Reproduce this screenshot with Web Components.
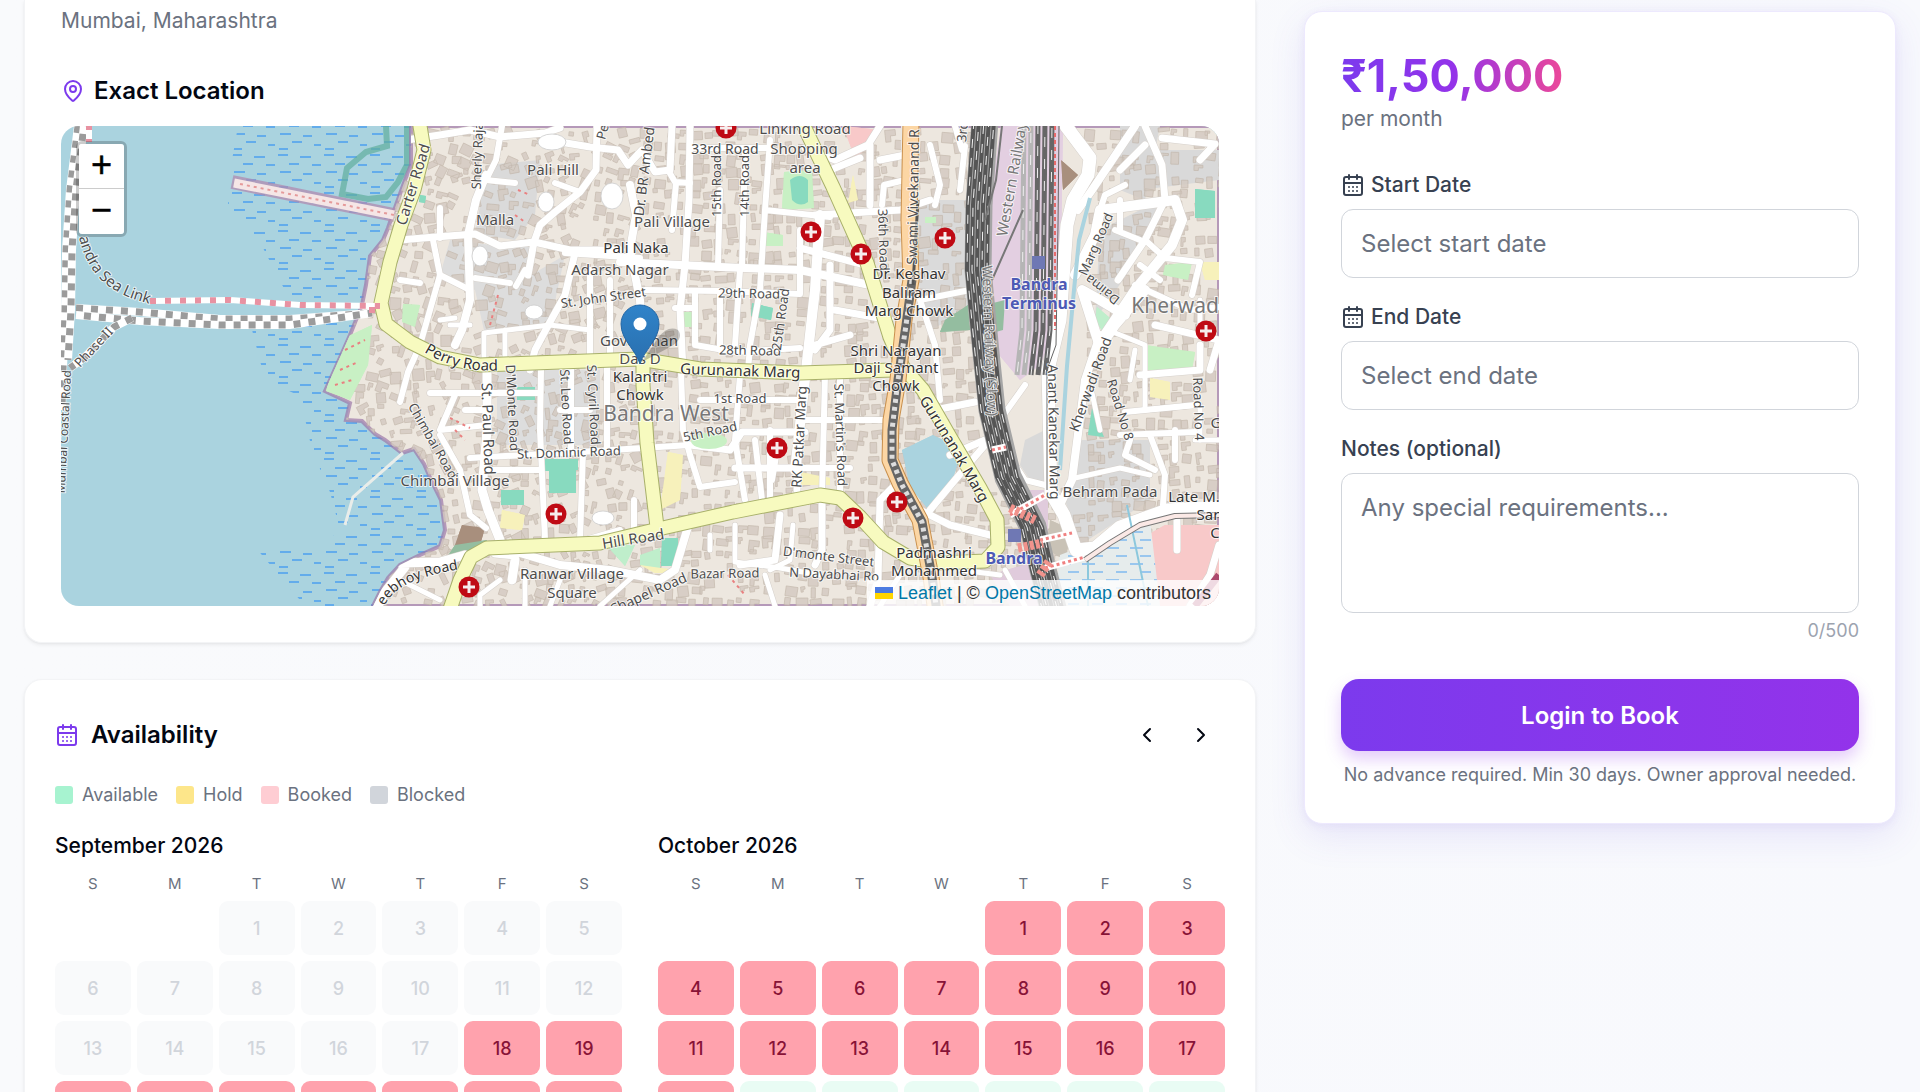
<!DOCTYPE html>
<html lang="en">
<head>
<meta charset="utf-8">
<meta name="viewport" content="width=device-width, initial-scale=1">
<title>Property details</title>
<style>
  body { margin: 0; background: linear-gradient(90deg, #f9fafc, #f8f9fd); font-family: Inter, "Liberation Sans", sans-serif; color: #030712; height: 100vh; overflow: hidden; }
</style>
</head>
<body>
<listing-page></listing-page>

<script>
const ICONS = {
  pin: '<path d="M20 10c0 5-5.500 10.200-7.400 11.800a1 1 0 0 1-1.200 0C9.500 20.200 4 15 4 10a8 8 0 0 1 16 0"/><circle cx="12" cy="10" r="3"/>',
  calendar: '<path d="M8 2v4M16 2v4M3 10h18"/><rect x="3" y="4" width="18" height="18" rx="2"/><path d="M8 14h.01M12 14h.01M16 14h.01M8 18h.01M12 18h.01M16 18h.01"/>',
  left: '<path d="m15 18-6-6 6-6"/>',
  right: '<path d="m9 18 6-6-6-6"/>'
};

class UiIcon extends HTMLElement {
  constructor() { super(); this.attachShadow({ mode: 'open' }); }
  connectedCallback() {
    this.shadowRoot.innerHTML = `<style>:host{display:inline-flex;width:24px;height:24px;flex:none}svg{width:100%;height:100%}</style>
    <svg viewBox="0 0 24 24" fill="none" stroke="currentColor" stroke-width="2" stroke-linecap="round" stroke-linejoin="round" aria-hidden="true">${ICONS[this.getAttribute('name')]}</svg>`;
  }
}
customElements.define('ui-icon', UiIcon);

class SurfaceCard extends HTMLElement {
  constructor() {
    super();
    this.attachShadow({ mode: 'open' }).innerHTML = `<style>
      :host{display:block;background:#fff;border:1px solid #f3f4f6;border-radius:18px;padding:var(--pad,36px);box-shadow:0 2px 4px rgba(0,0,0,.06),0 1px 2px rgba(0,0,0,.03)}
      :host([continued]){border-top:0;border-top-left-radius:0;border-top-right-radius:0;padding-top:6px}
      :host([raised]){border-color:#ede9fe;box-shadow:0 12px 36px rgba(109,80,220,.12),0 2px 8px rgba(109,80,220,.08)}
    </style><slot></slot>`;
  }
}
customElements.define('surface-card', SurfaceCard);

/* ---------- street map ---------- */
const LAND = 'M411 126L411 165L405 180L396 205L388 228L383 240L370 256L366 285L362 305L350 335L338 362L325 391L350 403L346 420L362 421L375 434L385 440L402 453L414 449L424 464L432 482L441 500L445 530L440 546L420 555L400 565L388 578L380 592L373 606H1219V126Z';
const WAVES = 'M238 126H411V165L396 205L366 256V300H290L262 246L228 205L232 160ZM250 322H356L325 391L350 403V420H362L402 453L424 464L445 530L440 546L400 565L373 606H305L256 548L316 552L340 530L330 492L312 450L300 396L265 380Z';

const YELLOW = [
  'M419 120L424 150L414 190L401 225L390 262L381 303L386 324L410 342L440 357L480 365L560 362L640 359L700 369L800 373L893 370',
  'M801 120L833 187L867 263L890 337L903 367L923 390L950 437L980 488L997 520L998 547L985 561L940 563L910 558L883 542L860 517L840 498L820 495L733 512L667 527L600 543L487 548L471 557L460 580L449 612',
  'M643 365L643 385L647 443L657 527'
];
const WHITE = [
  [7,'M400 141L440 135L470 130L500 137L545 133L560 128'],[6,'M502 126L496 160L486 180L515 183'],[8,'M486 175L476 200L468 235L470 300L462 330L455 345'],
  [7,'M400 240L435 237L475 234L500 246L534 242L570 250L620 250'],[7,'M597 126L596 170L580 192L555 212L540 225L534 242L528 275'],[6,'M555 183L580 192M525 270L516 286M475 278L510 283'],
  [6,'M433 240L440 275L430 310L420 345L408 372L400 402'],[6,'M440 275L470 290M440 208V238M400 280L420 283'],[7,'M575 253L565 295L550 322L535 350L530 370'],
  [5,'M484 362V333L550 325L590 330M505 330V360M450 325H470M440 320L455 318'],[7,'M560 142L590 147L618 150L628 165L642 150L655 172L670 170L672 126'],
  [8,'M630 185L636 215L630 250L640 300L643 365'],[6,'M668 170L675 182L690 183M676 183L672 230'],[7,'M690 126L689 200L685 265L680 310L683 370'],[8,'M620 262L720 267L800 270L865 284'],
  [6,'M720 190L718 265M745 150L742 265M740 270L735 345'],[6,'M765 210L760 290L750 345L748 372M770 140L765 210L830 217'],[6,'M645 290L720 291L800 294L800 230'],
  [6,'M720 292V350M695 292V345L735 352L800 348M675 308H695V345'],[10,'M820 215L815 290L806 370L795 470'],[6,'M690 148H770'],[6,'M590 270L590 330V358M565 253L640 258M610 280V358'],
  [9,'M487 370V430L482 490L488 510L500 540'],[6,'M430 393H540M465 410H482M440 430L487 425M455 395L440 430M440 435L460 470L470 515L486 528'],[6,'M541 370L540 430L545 540'],[6,'M470 458L580 452L690 445M490 470H540'],
  [6,'M571 370V450M607 365V448M583 452L580 540M560 410H590'],[6,'M681 370L683 430L690 455L700 487L735 482'],[6,'M700 400H800M740 375L735 440L745 500'],[7,'M690 445L730 450L742 432H805M735 468H800'],
  [6,'M634 500V530M620 530L585 540M770 430V500M778 445L772 480M755 440L762 500'],[7,'M805 370L800 400L797 490M780 515L775 560L740 565'],[8,'M520 553L560 565L610 570L660 580L675 570L690 520'],
  [9,'M495 553L515 555M515 560L512 580M400 563L440 562L465 555M405 567L385 592L375 612'],[5,'M735 525V562L780 568L820 575M765 575L775 606M793 525L790 560L770 570M710 535V550'],
  [5,'M400 580L440 600M500 580L480 595V606M525 570V606M560 580L550 606M640 570L600 606'],
  [7,'M805 148L835 160L868 145L880 126M870 145V205M880 160L905 155L905 126M815 215L900 210L930 200M830 170L860 158'],[6,'M882 205L884 185L905 180M930 145L940 185L935 205'],
  [6,'M965 146L960 190M955 126L962 150M920 300L970 290M920 300L935 345L940 400'],[7,'M800 248L865 265M830 265V330L815 350M835 310L890 320M815 345L850 335'],[6,'M840 375V495M800 420H885M825 375L822 495M800 468H850'],
  [7,'M935 410L975 402M950 455L985 440M930 510L955 480L985 445'],[7,'M900 480L880 500L878 580L870 606M900 500L950 525L990 535M822 500L822 550L815 565'],
  [13,'M1066 126L1090 158L1088 175L1073 200L1067 225L1060 320L1048 370L1051 493L1064 515L1076 550L1095 548L1120 527L1167 510L1219 507'],
  [8,'M1135 126L1092 190L1078 210'],[10,'M1100 342L1135 290L1172 245L1182 220L1175 200L1100 210L1095 235L1075 275'],[7,'M1145 126L1162 165L1165 200L1145 240L1118 280M1145 145L1120 170M1162 138L1215 144L1200 160'],
  [6,'M1100 210L1105 195L1125 185M1135 285L1190 310L1219 307M1145 240L1165 258L1200 262L1192 295M1115 230L1140 240M1120 200L1120 230M1140 265L1160 280'],
  [10,'M1145 290L1115 325L1100 347L1082 290L1100 300L1125 315'],[8,'M1100 335L1085 380L1072 480L1060 505'],[5,'M1092 393L1100 430M1108 330L1145 345L1145 410L1200 405L1200 440'],
  [7,'M1155 325L1219 340L1210 370M1140 375L1200 370L1200 345'],[6,'M1125 412L1195 405M1120 435L1195 432M1150 435L1165 475L1163 505M1175 430V460M1130 440L1125 455L1155 470'],
  [5,'M1075 478L1120 468L1150 475'],[6,'M1000 410L1005 450L1025 480L1045 485M985 370L1000 420L1025 385'],[5,'M1135 350L1130 380M1195 440H1219M1200 300V330'],
  [7,'M1219 545L1210 575L1190 606M1177 520V550'],[5,'M1005 570L1025 606M900 575L880 606M960 570L1000 575']
];
const AREAS = [
  ['#dddddd','M450 240L500 246L534 242L526 278L565 255L550 325L485 335L475 290L440 275Z'],['#dadada','M487 165L540 160L535 215L515 240L475 234Z'],['#dddddd','M497 370H600V445H497Z'],
  ['#dadada','M919 200H970V310L930 330L918 280Z'],['#d9d9d9','M1120 150L1219 150V180L1140 190ZM1100 230L1160 200L1130 270L1095 320Z'],['#d9d9d9','M1025 440L1045 430V483L1030 480L1020 465Z'],
  ['#dadada','M1080 440H1150V500L1080 545L1065 500Z'],['#d9d9d9','M1120 126H1160L1145 200L1120 190Z'],
  ['#e3cfe1','M1001 126H1063L1060 320L1040 365L1020 380L995 350L985 265L990 200Z'],['#e0cbdc','M1025 490H1048V570H1035ZM990 575L1040 560L1050 606H1010Z'],
  ['#f8c9c9','M843 126L880 130L865 150L855 158ZM1165 525H1219V606H1140L1130 545Z'],['#a88f7d','M1061 160L1078 175L1063 190ZM462 525L485 528L480 545L455 545Z'],
  ['#94bda0','M455 545L487 540L480 553L445 560ZM945 320L968 305L970 330L940 332ZM993 303L1005 300L1003 330L992 333Z'],
  ['#c8f0c4','M340 340L372 325L368 365L350 400L326 391ZM1145 345L1195 352L1192 370L1143 370ZM1165 265L1192 262L1188 280L1163 275ZM784 172L812 170L814 208L782 210ZM763 232L783 235V246H762ZM403 304L420 305L415 327L402 322ZM677 312H692V327H678ZM925 217H936V223H925Z'],
  ['#bfeecb','M606 545L635 545L625 566ZM640 555L660 548V572L640 565ZM1097 307L1110 318L1103 332L1095 320Z'],
  ['#88dabf','M545 459H578V470H576V493H549V471H545ZM501 490H524V505H501ZM517 387H535V400H517ZM662 538H678V566H661ZM752 303L773 308L771 320L751 316ZM1195 189L1215 191V218L1195 218ZM1092 408L1104 437L1088 435ZM790 180Q800 172 808 180L808 202Q800 208 792 200ZM420 195L426 196L425 203L419 202Z'],
  ['#aad3df','M902 450L933 435L943 440L958 463L950 487L927 508L910 487Z'],['#f7f1bb','M668 452L683 455L680 500L660 510ZM853 175L858 200L848 203ZM502 510L525 515L522 530L500 528ZM640 565L675 570L672 573L655 573ZM1150 378L1170 382V400L1150 397ZM1200 262H1219V280H1205ZM800 472L830 478V485H800Z'],
  ['#c9c2b6','M1050 520L1072 530L1065 560L1048 550Z'],['#e6ecec','M1060 555L1150 520L1160 606H1055Z']
];
/* [text, middle x, baseline y, size, rotation, tone] */
const LABELS = [
  ['Linking Road',805,134,15,0],['Shopping',804,154,15,0],['area',805,173,15,0],['33rd Road',725,154,14,0],['Pali Hill',553,175,15,0],['Malla',495,225,15,0],['Pali Village',672,227,15,0],['Pali Naka',636,253,15,0,'dark'],
  ['Adarsh Nagar',620,275,15,0],['St. John Street',604,302,13,-8],['29th Road',749,298,13,1],['28th Road',750,355,13,1],['1st Road',740,403,13,0],['5th Road',711,436,13,-12],
  ['Govardhan',639,346,15,0],['Das D',640,364,15,0],['Kalantri',640,382,15,0,'dark'],['Chowk',640,400,15,0,'dark'],['Bandra West',666,421,21,0,'soft'],
  ['Sherly Rajan',482,152,13,-88],['Carter Road',418,186,15,-73],['Dr. BR Ambed',649,172,14,-83],['15th Road',721,186,13,-90],['14th Road',749,186,13,-90],['25th Road',785,320,13,-82],['Pe',607,133,13,-75],
  ["D'Monte Road",508,408,13,87],['St. Paul Road',483,429,15,88],['St. Leo Road',562,407,13,87],['St. Cyril Road',589,405,13,87],['St. Dominic Road',569,457,13,-2],['Chimbai Road',429,443,13,60],
  ['Chimbai Village',455,486,15,0],['Ranwar Village',572,579,15,0],['Square',572,598,15,0],['Hill Road',634,544,15,-9],['Bazar Road',725,578,13,-1],['Chapel Road',650,598,14,-24],['RK Patkar Marg',804,437,14,-87],
  ["D'monte Street",828,561,13,7],['N Dayabhai Ro',834,579,13,3],["St. Martin's Road",836,435,13,88],['Dr. Keshav',909,279,15,0,'dark'],['Baliram',909,298,15,0,'dark'],['Marg Chowk',909,316,15,0,'dark'],
  ['Shri Narayan',896,356,15,0,'dark'],['Daji Samant',896,373,15,0,'dark'],['Chowk',896,391,15,0,'dark'],['36th Road',879,240,13,88],['Swami Vivekanand R',918,197,14,-89],['3rd',967,132,13,-85],
  ['Western Railway',1017,180,15,-80,'rail'],['Western Railway (Slow)',985,341,14,88,'rail'],['Bandra',1039,290,16,0,'station'],['Terminus',1039,309,16,0,'station'],['Bandra',1014,564,16,0,'station'],
  ['Marg Road',1100,246,13,-66],['Daima',1105,286,13,-142],['Kherwad',1175,313,21,0,'soft'],['Kherwadi Road',1095,386,14,-70],['Anant Kanekar Marg',1049,432,14,89],['Road No 8',1116,411,13,73],['Road No 4',1194,409,13,88],
  ['Behram Pada',1110,497,15,0],['Late M.',1194,502,15,0,'dark'],['Sar',1208,520,15,0,'dark'],['C',1215,538,15,0,'dark'],['G',1216,428,15,0],['Padmashri',934,558,15,0,'dark'],['Mohammed',934,576,15,0,'dark'],
  ['Mumbai Coastal Road',68,432,12,-87]
];
const HOSPITALS = [[726,128],[811,232],[861,254],[945,238],[1206,331],[777,448],[556,514],[469,587],[897,502],[853,518]];

function buildings() {
  let s = 7, d = '';
  const r = () => (s = (s * 16807) % 2147483647) / 2147483647;
  for (let y = 128; y < 606; y += 12) for (let x = 340; x < 1219; x += 12) {
    if (r() < .22) continue;
    if (x > 975 && x < 1075 && y < 480) continue;
    const w = 4 + r() * 8, h = 4 + r() * 8, a = (r() - .5) * (x < 640 ? 1 : .3), px = x + r() * 5, py = y + r() * 5;
    const c = Math.cos(a), n = Math.sin(a), p = (u, v) => (px + u * c - v * n).toFixed(1) + ' ' + (py + u * n + v * c).toFixed(1);
    d += r() < .3 ? `M${p(0,0)}L${p(w,0)}L${p(w,h/2)}L${p(w/2,h/2)}L${p(w/2,h)}L${p(0,h)}Z` : `M${p(0,0)}L${p(w,0)}L${p(w,h)}L${p(0,h)}Z`;
  }
  return d;
}
const stroke = (d, c, w, x = '') => `<path d="${d}" stroke="${c}" stroke-width="${w}" ${x}/>`;

class StreetMap extends HTMLElement {
  constructor() { super(); this.attachShadow({ mode: 'open' }); }
  connectedCallback() {
    const rail = 'M985 120L979 205L978 270L986 353L992 410L1008 477L1033 527L1043 570L1054 612';
    const rail2 = 'M1042 120L1040 330L1035 375';
    const orange = 'M911 120L909 220L911 280L904 320L898 380L891 420L890 460L900 483L920 520L931 577L936 612';
    const innerRail = 'M912 280L906 325L898 380L892 430L892 460L902 485L922 522L932 577L937 612';
    const bridge = 'M76 308L140 312L220 319L290 319L372 313';
    this.shadowRoot.innerHTML = `<style>
      :host{display:block;position:relative;height:480px;border-radius:18px;overflow:hidden;background:#aad3df}
      .canvas{display:block;width:100%;height:100%;font-family:"Noto Sans",sans-serif}
      .canvas text{fill:#4d4d4d;stroke:rgba(255,255,255,.75);stroke-width:2px;paint-order:stroke;stroke-linejoin:round}
      .canvas .dark{fill:#333}.canvas .soft{fill:#777}.canvas .rail{fill:#777}.canvas .station{fill:#4d5ab5;font-weight:700}
      .zoom{position:absolute;left:15px;top:15px;display:flex;flex-direction:column;border:3px solid rgba(0,0,0,.2);border-radius:6px;background-clip:padding-box}
      .zoom button{box-sizing:border-box;width:45px;height:45px;padding:0;border:0;background:#fff;color:#000;font:400 36px/48px "Liberation Mono",monospace;text-align:center;-webkit-text-stroke:.5px #000}
      .zoom button:first-child{border-bottom:1px solid #ccc;border-radius:3px 3px 0 0}
      .zoom button:last-child{border-radius:0 0 3px 3px}
      .credit{position:absolute;right:0;bottom:0;padding:0 8px;background:rgba(255,255,255,.8);color:#333;font:18px/26px "Liberation Sans",sans-serif;white-space:nowrap}
      .credit a{color:#0078a8;text-decoration:none}
      .credit svg{width:18px;height:12px}
    </style>
    <svg class="canvas" viewBox="61 126 1158 480" preserveAspectRatio="xMidYMid slice" fill="none">
      <defs>
        <clipPath id="land"><path d="${LAND}"/></clipPath>
        <pattern id="wave" width="46" height="38" patternUnits="userSpaceOnUse"><path d="M2 3h10M24 5h11M13 12h10M36 13h9M4 20h11M27 22h9M16 28h10M38 31h7M3 35h9" stroke="#4c9ff0" stroke-width="1.400"/></pattern>
        <pattern id="marsh" width="24" height="16" patternUnits="userSpaceOnUse"><path d="M2 4h13M12 12h11" stroke="#4c9ff0" stroke-width="1.200"/></pattern>
        <linearGradient id="pin" x1="0" y1="0" x2="0" y2="1"><stop stop-color="#2f83c9"/><stop offset="1" stop-color="#2a6fae"/></linearGradient>
        <path id="sea-link" d="M79 237C84 259 94 276 110 287S134 299 160 307"/>
        <path id="phase" d="M80 368L115 331"/>
        <path id="perry" d="M424 352C445 365 470 373 505 370"/>
        <path id="guru-a" d="M680 374L805 378"/>
        <path id="guru-b" d="M919 400L950 450L982 506"/>
        <path id="eebhoy" d="M384 606C394 589 408 576 480 566"/>
      </defs>
      <path fill="url(#wave)" d="${WAVES}"/>
      ${stroke('M386 126L387 146L366 152L347 168L342 194L368 199L386 197L398 182L407 165L407 126','#5fae9c',6,'opacity=".7"')}
      <path d="${LAND}" fill="#ede7df" stroke="#9c78a8" stroke-width="4" stroke-opacity=".7"/>
      <g clip-path="url(#land)">
        ${AREAS.map(([c, d]) => `<path fill="${c}" d="${d}"/>`).join('')}
        <path d="${buildings()}" fill="#d3c9c0" stroke="#bfb3a6" stroke-width=".8" opacity=".8"/>
        ${AREAS.slice(8).map(([c, d]) => `<path fill="${c}" d="${d}"/>`).join('')}
        <path fill="url(#marsh)" d="M1060 555L1150 520L1160 606H1055Z"/>
        <g stroke-linecap="round" stroke-linejoin="round">
          ${WHITE.map(([w, d]) => stroke(d, '#d6d1cc', w + 1)).join('')}
          ${WHITE.map(([w, d]) => stroke(d, '#fff', w)).join('')}
        </g>
        ${stroke('M1090 198L1079 240L1074 290L1067 366L1060 470','#aad3df',4)}
        ${stroke('M1127 505L1148 606M1088 560V606','#8cc8dd',2)}
        ${stroke(rail,'#a5a5a5',27)}${[-11,-6,-1,4,9].map((o, i) => `<g transform="translate(${o} 0)">${stroke(rail,'#555',4)}${stroke(rail,'#f2f2f2',1,`stroke-dasharray="9 10" stroke-dashoffset="${i * 7}"`)}</g>`).join('')}
        ${[-18,-11,-4,3,10].map((o, i) => `<g transform="translate(${o} 0)">${stroke(rail2, i < 2 ? '#b5b5b5' : '#666',5)}${stroke(rail2,'#eee',1,`stroke-dasharray="10 12" stroke-dashoffset="${i * 9}"`)}</g>`).join('')}
        ${stroke('M1002 126L996 180L985 220M1023 210L992 280','#777',2)}
        ${stroke('M1055 126V330','#e66a6a',2,'stroke-dasharray="4 3"')}
        ${stroke('M1059 126L1058 225L1056 345L1047 370V490','#666',1)}
        <g stroke-linejoin="round">
          ${stroke('M992 450L1006 447M1010 515L1045 495M1040 540L1072 533M1045 568L1085 557','#fff',7)}
          ${stroke('M992 450L1006 447M1010 515L1045 495M1040 540L1072 533M1045 568L1085 557','#f08080',3,'stroke-dasharray="3 3"')}
          ${stroke('M1010 508L1035 520M1018 548L1043 543M1040 575L1050 560','#f2938c',9,'stroke-dasharray="4 2"')}
          ${stroke('M1085 560L1110 543L1140 525L1175 516L1219 515','#777',6)}${stroke('M1085 560L1110 543L1140 525L1175 516L1219 515','#fbe9e6',4)}
          ${stroke('M1219 575L1195 606','#ad496d',7)}
          ${YELLOW.map(d => stroke(d, '#a8b06a', 15)).join('')}${YELLOW.map(d => stroke(d, '#f7fabf', 13)).join('')}
          ${stroke(orange,'#c9904e',17)}${stroke(orange,'#fcd6a4',15)}
          ${stroke(innerRail,'#666',9)}${stroke(innerRail,'#ddd',5,'stroke-dasharray="4 4"')}
          ${stroke('M918 200L913 285','#555',3)}
        </g>
        ${stroke('M345 350L365 340M340 370L358 362M335 385L352 380M450 418L470 428M455 430L465 440M728 575L745 595','#e98080',2,'stroke-dasharray="3 4"')}
        ${stroke('M498 295L490 325M515 215L525 222M518 190L530 195','#e98080',2,'stroke-dasharray="3 4"')}
        <ellipse cx="709" cy="441" rx="18" ry="8" fill="#c8f0c4"/>
        <g fill="#fff" stroke="#ccc" stroke-width=".8"><ellipse cx="612" cy="196" rx="11" ry="13"/><ellipse cx="546" cy="202" rx="8" ry="10"/><ellipse cx="480" cy="256" rx="8" ry="10"/><ellipse cx="534" cy="312" rx="9" ry="7"/><ellipse cx="552" cy="142" rx="14" ry="8"/><ellipse cx="603" cy="518" rx="11" ry="7"/></g>
      </g>
      <g stroke-linecap="butt">
        ${stroke('M403 453L353 497L345 525','#e9edea',3)}
        ${stroke('M232 182L394 215','#b08bb0',14,'opacity=".75"')}${stroke('M234 183L394 215','#f5e6e6',9)}${stroke('M240 184L394 215','#e59a9a',2,'stroke-dasharray="3 4"')}
        ${['M78 126L70 190L66 250L65 310L63 370L62 410','M84 126L76 190L72 250L71 310L68 360',bridge,'M76 315L140 321L220 325L290 325L372 313','M132 318L114 327L84 358L70 368'].map((d, i) => stroke(d,'#fff',8) + stroke(d,'#9b9b9b',7,`stroke-dasharray="7 8" stroke-dashoffset="${i % 2 * 7}"`)).join('')}
        ${stroke('M89 126V142','#fff',6)}${stroke('M89 126V142','#e892a2',6,'stroke-dasharray="4 9"')}
        ${stroke('M150 301L230 300L300 305L380 306','#fff',6)}${stroke('M150 301L230 300L300 305L380 306M372 307L372 318','#e892a2',6,'stroke-dasharray="6 9"')}
      </g>
      <g text-anchor="middle">${LABELS.map(([t, x, y, z, a, k]) => `<text class="${k || ''}" font-size="${z}" transform="translate(${x} ${y}) rotate(${a})">${t}</text>`).join('')}</g>
      <g font-size="15">
        <text><textPath href="#sea-link">andra Sea Link</textPath></text>
        <text font-size="13"><textPath href="#phase">Phase II</textPath></text>
        <text class="dark"><textPath href="#perry">Perry Road</textPath></text>
        <text class="dark"><textPath href="#guru-a">Gurunanak Marg</textPath></text>
        <text class="dark"><textPath href="#guru-b">Gurunanak Marg</textPath></text>
        <text class="dark" font-size="14"><textPath href="#eebhoy">eebhoy Road</textPath></text>
      </g>
      <path fill="#6f78b4" d="M1032 256h13v13h-13zM1008 529h13v13h-13z"/>
      ${HOSPITALS.map(([x, y]) => `<g transform="translate(${x} ${y})"><circle r="10.500" fill="#bf0a14"/><path d="M-6 0H6M0-6V6" stroke="#f6eeee" stroke-width="3"/></g>`).join('')}
      <path d="M642 362L658 338Q668 325 678 330Q684 338 672 346Z" fill="#000" opacity=".22"/>
      <path d="M640 364C636 350 621 340 621 324A19 19 0 0 1 659 324C659 340 644 350 640 364Z" fill="url(#pin)" stroke="#2467a5" stroke-width="1"/>
      <circle cx="640" cy="324" r="6.500" fill="#fff"/>
    </svg>
    <div class="zoom"><button type="button" aria-label="Zoom in">+</button><button type="button" aria-label="Zoom out">−</button></div>
    <div class="credit"><a href="#leaflet"><svg viewBox="0 0 12 8" aria-hidden="true"><path fill="#4c7be1" d="M0 0h12v4H0z"/><path fill="#ffd500" d="M0 4h12v4H0z"/></svg> Leaflet</a> | © <a href="#osm">OpenStreetMap</a> contributors</div>`;
  }
}
customElements.define('street-map', StreetMap);

class LocationPanel extends HTMLElement {
  constructor() {
    super();
    this.attachShadow({ mode: 'open' }).innerHTML = `<style>
      :host{display:block}
      p{margin:0 0 37px;font-size:21px;line-height:30px;color:#6b7280}
      h2{display:flex;align-items:center;gap:9px;margin:0 0 17px;font-size:24px;line-height:36px;font-weight:600}
      ui-icon{color:#7c3aed}
    </style>
    <p><slot></slot></p><h2><ui-icon name="pin"></ui-icon>Exact Location</h2><street-map></street-map>`;
  }
}
customElements.define('location-panel', LocationPanel);

class MonthGrid extends HTMLElement {
  constructor() { super(); this.attachShadow({ mode: 'open' }); }
  connectedCallback() {
    const n = k => +this.getAttribute(k);
    let days = '';
    for (let d = 1; d <= n('days'); d++) {
      const state = d < n('booked-from') ? 'past' : d <= n('booked-to') ? 'booked' : 'open';
      days += `<button type="button" class="${state}"${state === 'open' ? '' : ' disabled'}${d === 1 ? ` style="grid-column-start:${n('offset') + 1}"` : ''}>${d}</button>`;
    }
    this.shadowRoot.innerHTML = `<style>
      :host{display:block}
      h3{margin:0 0 11px;font-size:21px;line-height:30px;font-weight:500}
      .grid{display:grid;grid-template-columns:repeat(7,1fr);gap:6px}
      .grid span{text-align:center;font-size:15px;line-height:23px;color:#6b7280}
      button{height:54px;border:0;padding:0;border-radius:9px;font-family:inherit;font-size:18px;font-weight:500}
      .past{background:#f9fafb;color:#d1d5db}.booked{background:#ffa2ad;color:#881337}.open{background:#e9fcf4;color:#065f46}
    </style>
    <h3>${this.getAttribute('name')}</h3><div class="grid">${[...'SMTWTFS'].map(c => `<span>${c}</span>`).join('')}${days}</div>`;
  }
}
customElements.define('month-grid', MonthGrid);

class AvailabilityPanel extends HTMLElement {
  constructor() {
    super();
    this.attachShadow({ mode: 'open' }).innerHTML = `<style>
      :host{display:block;padding-top:1px}
      header{display:flex;align-items:center;justify-content:space-between;margin-bottom:24px}
      h2{display:flex;align-items:center;gap:12px;margin:0;font-size:24px;line-height:36px;font-weight:600}
      h2 ui-icon{color:#7c3aed}
      nav{display:flex;gap:6px}
      nav button{display:flex;padding:12px;border:0;border-radius:12px;background:none;color:inherit}
      ul{display:flex;flex-wrap:wrap;gap:18px;margin:0 0 24px;padding:0;list-style:none;font-size:18px;line-height:24px;color:#6b7280}
      li{display:flex;align-items:center;gap:9px}
      li::before{content:"";width:18px;height:18px;border-radius:3px;background:var(--c)}
      .months{display:grid;grid-template-columns:1fr 1fr;gap:36px}
    </style>
    <header><h2><ui-icon name="calendar"></ui-icon>Availability</h2>
      <nav aria-label="Month"><button type="button" aria-label="Previous month"><ui-icon name="left"></ui-icon></button><button type="button" aria-label="Next month"><ui-icon name="right"></ui-icon></button></nav></header>
    <ul><li style="--c:#a7f3d0">Available</li><li style="--c:#fde68a">Hold</li><li style="--c:#fecdd3">Booked</li><li style="--c:#d1d5db">Blocked</li></ul>
    <div class="months">
      <month-grid name="September 2026" days="30" offset="2" booked-from="18" booked-to="30"></month-grid>
      <month-grid name="October 2026" days="31" offset="4" booked-from="1" booked-to="18"></month-grid>
    </div>`;
  }
}
customElements.define('availability-panel', AvailabilityPanel);

class BookingForm extends HTMLElement {
  constructor() {
    super();
    this.attachShadow({ mode: 'open' }).innerHTML = `<style>
      :host{display:block}
      .price{width:max-content;font-size:45px;line-height:56px;font-weight:700;background:linear-gradient(90deg,#7c3aed,#9333ea 50%,#ec4899);-webkit-background-clip:text;background-clip:text;color:transparent}
      .per{margin-bottom:36px;font-size:21px;line-height:30px;color:#6b7280}
      .field{margin-bottom:24px}
      label{display:flex;align-items:center;gap:6px;margin-bottom:9px;font-size:21px;line-height:30px;font-weight:500;color:#374151}
      input,textarea{display:block;box-sizing:border-box;width:100%;margin:0;padding:16px 19px;border:1px solid #d1d5db;border-radius:12px;background:#fff;font-family:inherit;font-size:24px;line-height:36px;color:#111827;resize:none;outline:0}
      input{height:69px}textarea{height:140px}
      ::placeholder{color:#6b7280;opacity:1}
      .count{margin-top:6px;text-align:right;font-size:18px;line-height:24px;color:#9ca3af}
      .submit{display:block;width:100%;height:72px;margin:36px 0 12px;padding:0;border:0;border-radius:18px;background:linear-gradient(90deg,#7c3aed,#9333ea);box-shadow:0 8px 16px rgba(147,51,234,.25);color:#fff;font-family:inherit;font-size:24px;font-weight:600}
      .note{text-align:center;font-size:18px;line-height:24px;color:#6b7280}
    </style>
    <div class="price">₹1,50,000</div><div class="per">per month</div>
    <div class="field"><label for="start"><ui-icon name="calendar"></ui-icon>Start Date</label><input id="start" type="text" placeholder="Select start date"></div>
    <div class="field"><label for="end"><ui-icon name="calendar"></ui-icon>End Date</label><input id="end" type="text" placeholder="Select end date"></div>
    <div><label for="notes">Notes (optional)</label><textarea id="notes" placeholder="Any special requirements..."></textarea><div class="count">0/500</div></div>
    <button type="button" class="submit">Login to Book</button>
    <div class="note">No advance required. Min 30 days. Owner approval needed.</div>`;
  }
}
customElements.define('booking-form', BookingForm);

class ListingPage extends HTMLElement {
  constructor() {
    super();
    this.attachShadow({ mode: 'open' }).innerHTML = `<style>
      :host{display:block;padding:0 24px}
      main{display:grid;grid-template-columns:repeat(3,minmax(0,1fr));gap:48px;align-items:start}
      .left{grid-column:span 2;display:flex;flex-direction:column;gap:36px}
      aside{padding-top:11px}
      .tight{--pad:30px}
    </style>
    <main><div class="left">
      <surface-card continued><location-panel>Mumbai, Maharashtra</location-panel></surface-card>
      <surface-card class="tight"><availability-panel></availability-panel></surface-card>
    </div><aside><surface-card raised><booking-form></booking-form></surface-card></aside></main>`;
  }
}
customElements.define('listing-page', ListingPage);
</script>
</body>
</html>
